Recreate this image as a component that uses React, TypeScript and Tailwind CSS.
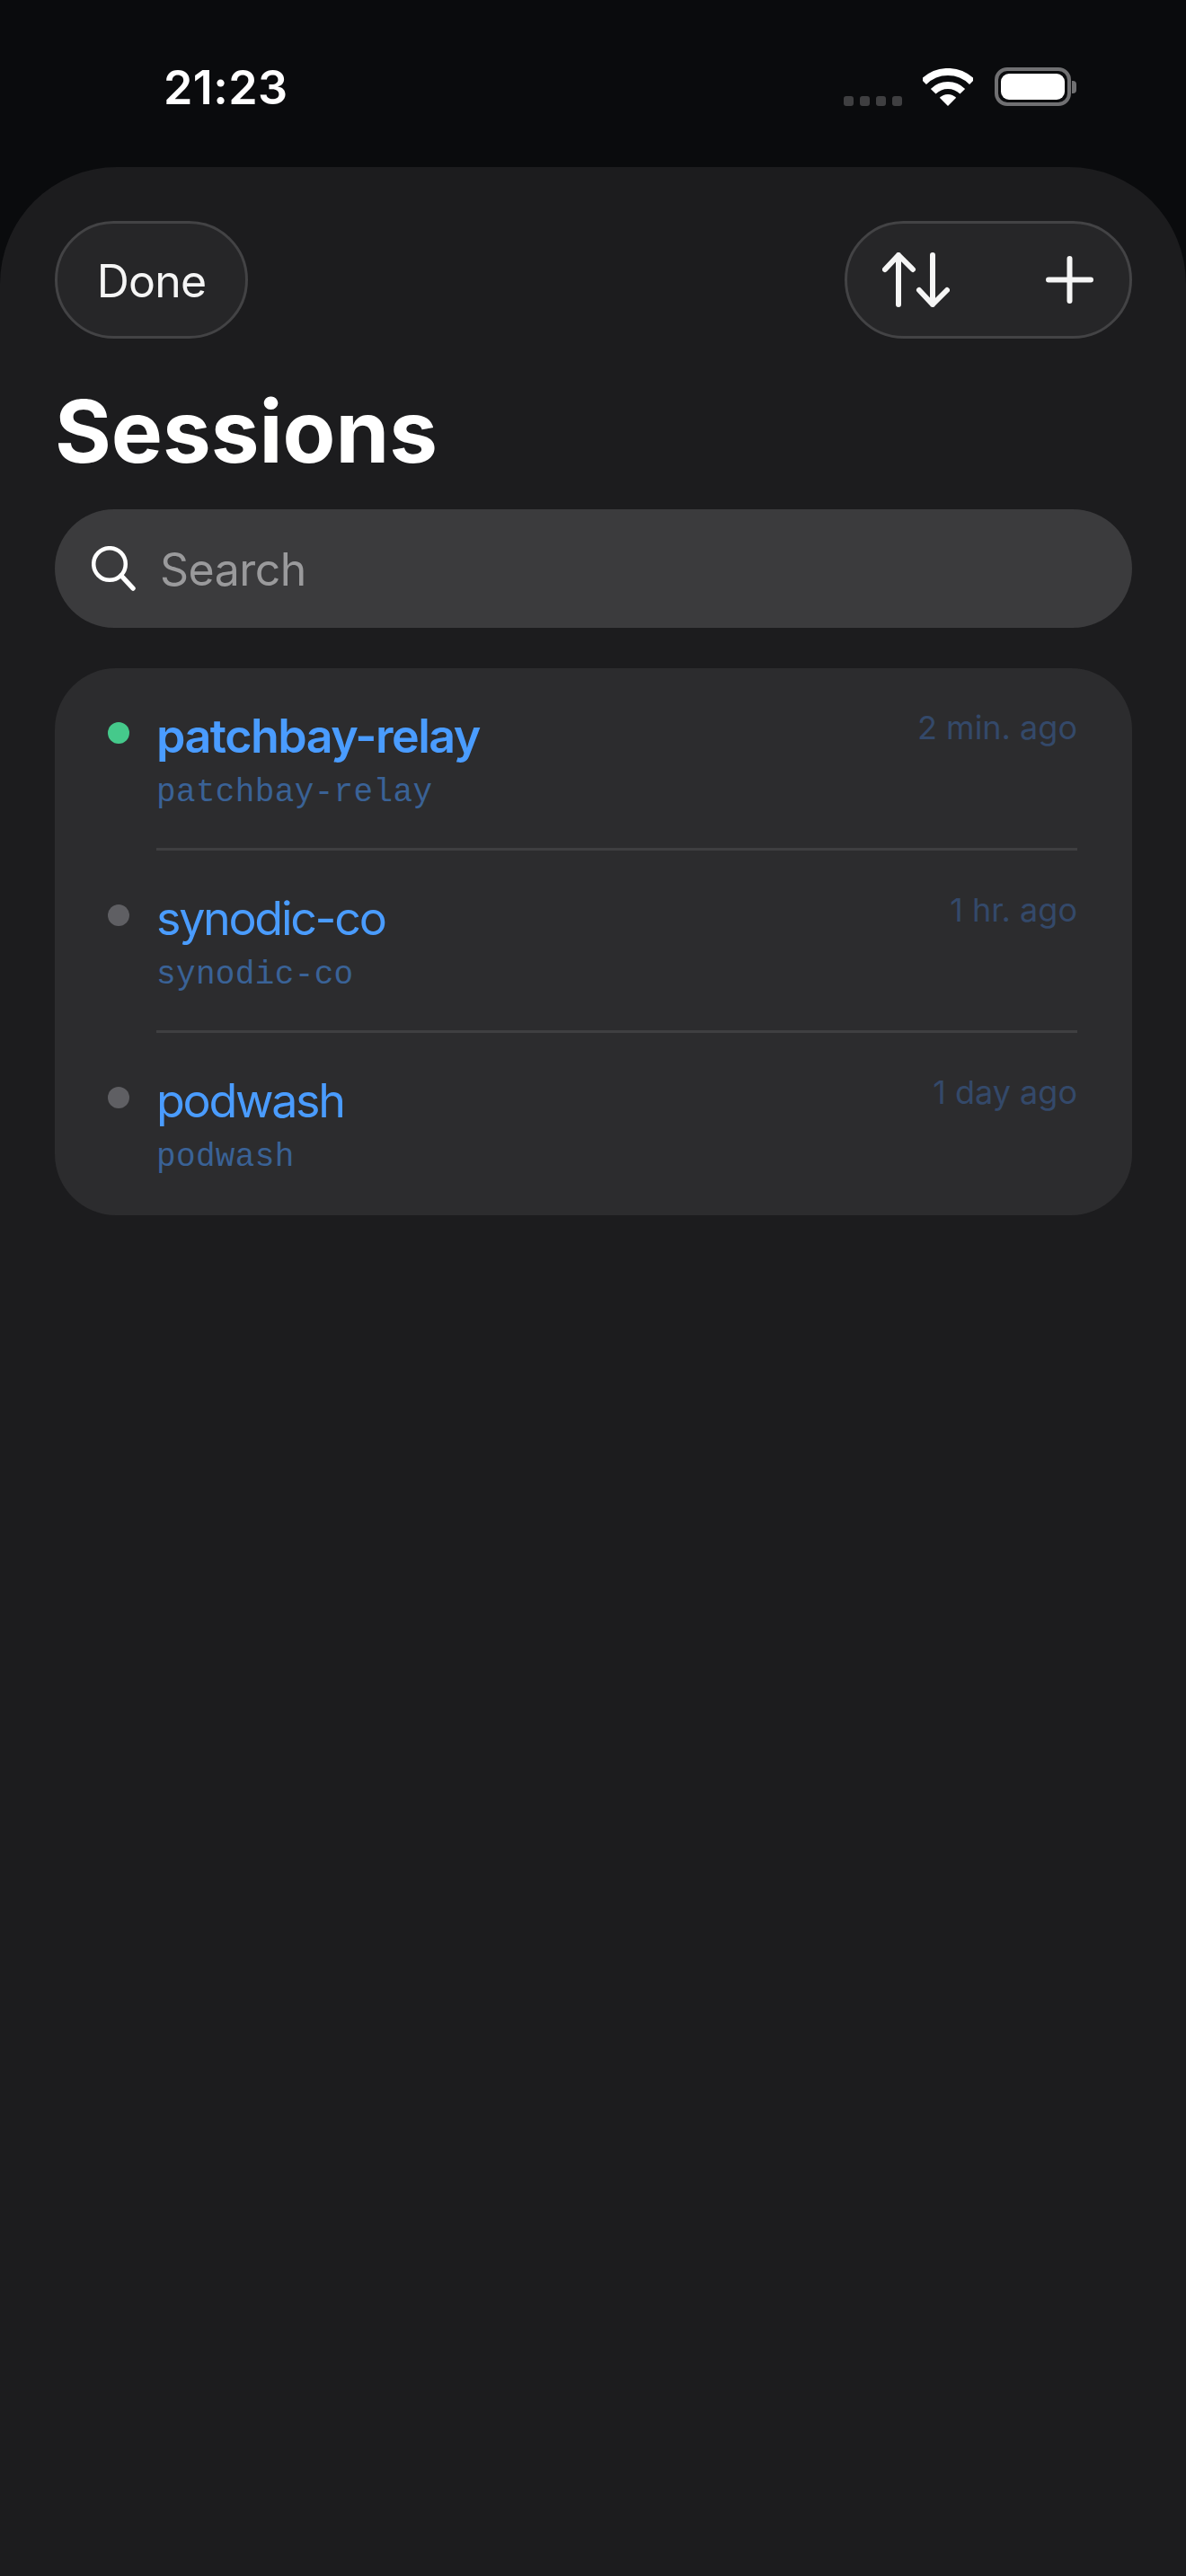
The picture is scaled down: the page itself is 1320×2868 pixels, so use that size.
const sessions = [
  { name: "patchbay-relay", time: "2 min. ago", active: true },
  { name: "synodic-co", time: "1 hr. ago", active: false },
  { name: "podwash", time: "1 day ago", active: false },
];

function Wifi() {
  return (
    <svg width="56" height="42" viewBox="0 0 56 42" fill="none">
      <path d="M1.1 15.1A38 38 0 0 1 54.9 15.1" stroke="white" strokeWidth="8" />
      <path d="M11.7 25.7A23 23 0 0 1 44.3 25.7" stroke="white" strokeWidth="8" />
      <path d="M28 42L18.8 32.8A13 13 0 0 1 37.2 32.8Z" fill="white" />
    </svg>
  );
}

function Battery() {
  return (
    <div className="flex items-center">
      <div className="flex h-[43px] w-[85px] items-center justify-center rounded-[14px] border-[4px] border-[#707072]">
        <div className="h-[29px] w-[71px] rounded-[9px] bg-white" />
      </div>
      <div className="ml-[1px] h-[14px] w-[5px] rounded-r-[4px] bg-[#707072]" />
    </div>
  );
}

function SortIcon() {
  return (
    <svg width="75" height="61" viewBox="0 0 75 61" fill="none" stroke="#f5f5f5" strokeWidth="6" strokeLinecap="round" strokeLinejoin="round">
      <path d="M18 58V3M3 19L18 3L34 19" />
      <path d="M56 3V58M41 42L56 58L72 42" />
    </svg>
  );
}

function PlusIcon() {
  return (
    <svg width="53" height="53" viewBox="0 0 53 53" fill="none" stroke="#f5f5f5" strokeWidth="6" strokeLinecap="round">
      <path d="M26.5 3V50M3 26.5H50" />
    </svg>
  );
}

function SearchIcon() {
  return (
    <svg width="50" height="50" viewBox="0 0 50 50" fill="none" stroke="white" strokeWidth="4.5" strokeLinecap="round">
      <circle cx="20" cy="20" r="17.8" />
      <path d="M33 33L46 47" strokeWidth="5.5" />
    </svg>
  );
}

function SessionRow({ name, time, active, last }: { name: string; time: string; active: boolean; last: boolean }) {
  return (
    <div className="flex h-[203px] pl-[59px] pr-[61px]">
      <div className={`mt-[60px] h-[24px] w-[24px] rounded-full ${active ? "bg-[#45c98b]" : "bg-[#5f5f63]"}`} />
      <div className={`ml-[30px] flex flex-1 items-start justify-between pt-[45px] ${last ? "" : "border-b-[3px] border-[#3f3f41]"}`}>
        <div>
          <div className={`font-['Inter'] text-[52px] leading-[62px] text-[#4a9cff] ${active ? "font-semibold tracking-[-1.5px]" : "font-normal tracking-[-2.3px]"}`}>
            {name}
          </div>
          <div className="mt-[10px] font-['Liberation_Mono'] text-[36px] leading-[44px] tracking-[0.35px] text-[#3a6296]">{name}</div>
        </div>
        <div className="mt-[-3px] font-['Inter'] text-[36px] leading-[48px] text-[#34496a]">{time}</div>
      </div>
    </div>
  );
}

export default function App() {
  return (
    <div className="flex h-[2868px] w-[1320px] flex-col bg-[#0a0b0d] font-['Inter']">
      <div className="flex h-[186px] items-start pl-[182px] pr-[122px]">
        <div className="mt-[66px] text-[52px] font-semibold leading-[64px] tracking-[0.4px] text-white">21:23</div>
        <div className="ml-auto mt-[75px] flex items-end">
          <div className="flex gap-[7px]">
            <div className="h-[11px] w-[11px] rounded-[3px] bg-[#3f3f41]" />
            <div className="h-[11px] w-[11px] rounded-[3px] bg-[#3f3f41]" />
            <div className="h-[11px] w-[11px] rounded-[3px] bg-[#3f3f41]" />
            <div className="h-[11px] w-[11px] rounded-[3px] bg-[#3f3f41]" />
          </div>
          <div className="ml-[23px]">
            <Wifi />
          </div>
          <div className="ml-[24px]">
            <Battery />
          </div>
        </div>
      </div>
      <div className="flex-1 rounded-t-[130px] bg-[#1c1c1e] pl-[61px] pr-[60px] pt-[60px]">
        <div className="flex justify-between">
          <div className="flex h-[131px] w-[215px] items-center justify-center rounded-full border-[3px] border-[#434345] bg-[#262628] pt-[3px] text-[50px] tracking-[-0.8px] text-[#f5f5f5]">
            Done
          </div>
          <div className="flex h-[131px] w-[320px] items-center rounded-full border-[3px] border-[#434345] bg-[#262628] pl-[39px]">
            <SortIcon />
            <div className="ml-[107px]">
              <PlusIcon />
            </div>
          </div>
        </div>
        <h1 className="mt-[45px] text-[96px] font-bold leading-[116px] text-white">Sessions</h1>
        <div className="mt-[29px] flex h-[132px] items-center rounded-full bg-[#3b3b3d] pl-[41px]">
          <SearchIcon />
          <span className="ml-[26px] pt-[2px] text-[50px] tracking-[-0.5px] text-[#9a9a9c]">Search</span>
        </div>
        <div className="mt-[45px] rounded-[68px] bg-[#2c2c2e]">
          {sessions.map((s, i) => (
            <SessionRow key={s.name} name={s.name} time={s.time} active={s.active} last={i === sessions.length - 1} />
          ))}
        </div>
      </div>
    </div>
  );
}
